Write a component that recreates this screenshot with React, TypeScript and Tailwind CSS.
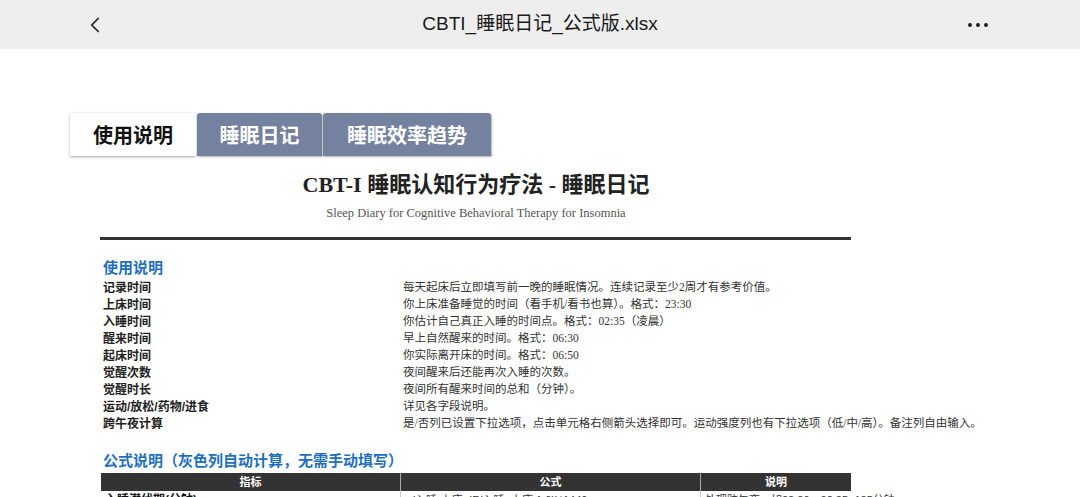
import { ChevronLeft } from "lucide-react";

const cjk = "font-['Liberation_Sans','Noto_Sans_CJK_SC',sans-serif]";
const serif = "font-['Liberation_Serif','Noto_Sans_CJK_SC',serif]";

const rows: [string, string][] = [
  ["记录时间", "每天起床后立即填写前一晚的睡眠情况。连续记录至少2周才有参考价值。"],
  ["上床时间", "你上床准备睡觉的时间（看手机/看书也算）。格式：23:30"],
  ["入睡时间", "你估计自己真正入睡的时间点。格式：02:35（凌晨）"],
  ["醒来时间", "早上自然醒来的时间。格式：06:30"],
  ["起床时间", "你实际离开床的时间。格式：06:50"],
  ["觉醒次数", "夜间醒来后还能再次入睡的次数。"],
  ["觉醒时长", "夜间所有醒来时间的总和（分钟）。"],
  ["运动/放松/药物/进食", "详见各字段说明。"],
  ["跨午夜计算", "是/否列已设置下拉选项，点击单元格右侧箭头选择即可。运动强度列也有下拉选项（低/中/高）。备注列自由输入。"],
];

export default function App() {
  return (
    <div className={`h-[497px] w-[1080px] overflow-hidden bg-white ${cjk}`}>
      <div className="relative flex h-[49px] items-center justify-center bg-[#eeeeee]">
        <ChevronLeft className="absolute left-[82px] top-[12px] h-[26px] w-[26px] text-[#222]" strokeWidth={1.6} />
        <span className="text-[19px] text-[#1a1a1a]">CBTI_睡眠日记_公式版.xlsx</span>
        <div className="absolute left-[968px] top-[23px] flex gap-[4px]">
          <span className="h-[4px] w-[4px] rounded-full bg-[#222]" />
          <span className="h-[4px] w-[4px] rounded-full bg-[#222]" />
          <span className="h-[4px] w-[4px] rounded-full bg-[#222]" />
        </div>
      </div>

      <div className="flex pl-[70px] pt-[64px]">
        <div className="flex h-[43px] w-[126px] items-center justify-center rounded-t-[3px] bg-white pt-[2px] text-[20px] font-bold text-[#111] shadow-[0_1px_3px_rgba(0,0,0,0.35)]">
          使用说明
        </div>
        <div className="ml-[1px] flex h-[43px] w-[125px] items-center justify-center rounded-t-[3px] bg-[#7482a0] pt-[2px] text-[20px] font-bold text-white shadow-[1px_1px_2px_rgba(0,0,0,0.3)]">
          睡眠日记
        </div>
        <div className="ml-[1px] flex h-[43px] w-[168px] items-center justify-center rounded-t-[3px] bg-[#7482a0] pt-[2px] text-[20px] font-bold text-white shadow-[1px_1px_2px_rgba(0,0,0,0.3)]">
          睡眠效率趋势
        </div>
      </div>

      <div className="w-[952px] pt-[15px] text-center">
        <div className={`${serif} text-[22px] font-bold leading-[28px] text-[#222]`}>CBT-I 睡眠认知行为疗法 - 睡眠日记</div>
        <div className={`${serif} mt-[6px] text-[12.5px] leading-[16px] text-[#555]`}>
          Sleep Diary for Cognitive Behavioral Therapy for Insomnia
        </div>
      </div>
      <div className="ml-[100px] mt-[16px] h-[3px] w-[751px] bg-[#333]" />

      <div className="pl-[103px] pt-[17px]">
        <div className="text-[15px] font-bold leading-[22px] text-[#1e6fc0]">使用说明</div>
        {rows.map(([k, v]) => (
          <div key={k} className="flex h-[17px] items-center text-[11.5px] text-[#222]">
            <span className="w-[300px] text-[12px] font-bold">{k}</span>
            <span className={`${serif} text-[#333]`}>{v}</span>
          </div>
        ))}
        <div className="mt-[18px] text-[15px] font-bold leading-[22px] text-[#1e6fc0]">公式说明（灰色列自动计算，无需手动填写）</div>
      </div>

      <div className="ml-[101px] mt-[1px] grid w-[750px] grid-cols-[300px_300px_150px] text-[11px]">
        <div className="flex h-[18px] items-center justify-center border-r border-[#aaa] bg-[#333] font-bold text-white">指标</div>
        <div className="flex h-[18px] items-center justify-center border-r border-[#aaa] bg-[#333] font-bold text-white">公式</div>
        <div className="flex h-[18px] items-center justify-center bg-[#333] font-bold text-white">说明</div>
        <div className="flex h-[18px] items-center border-r border-[#ccc] px-[4px] text-[12px] font-bold text-[#111]">入睡潜伏期(分钟)</div>
        <div className="flex h-[18px] items-center border-r border-[#ccc] px-[4px] text-[#333]">=(入睡-上床+IF(入睡&lt;上床,1,0))*1440</div>
        <div className="flex h-[18px] items-center whitespace-nowrap px-[4px] text-[#333]">处理跨午夜，如23:30→02:35=185分钟</div>
      </div>
    </div>
  );
}
